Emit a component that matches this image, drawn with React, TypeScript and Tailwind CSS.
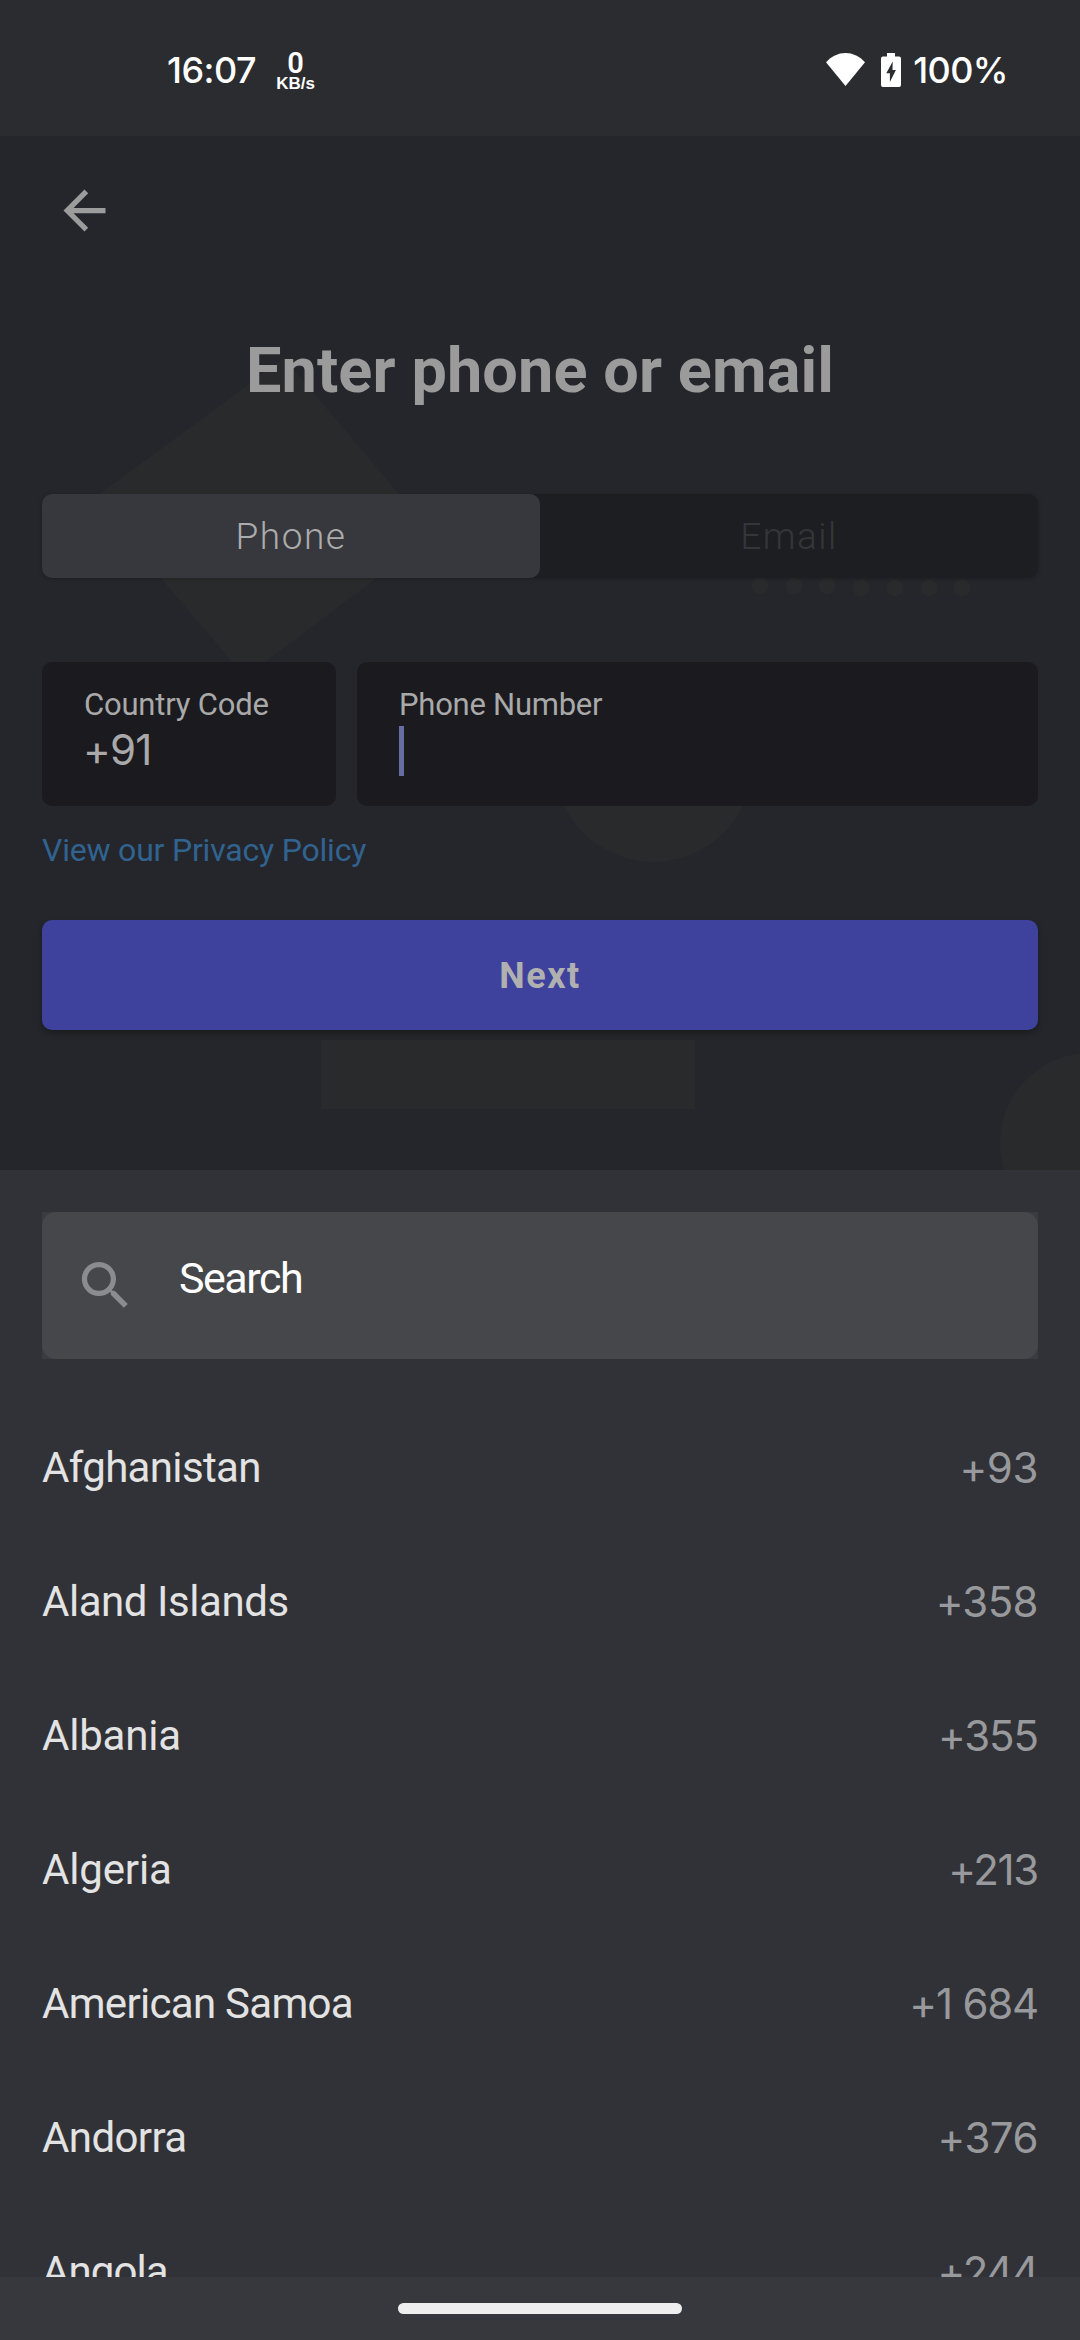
type Country = { name: string; code: string; nameFit: string; codeFit: string };

const countries: Country[] = [
  { name: "Afghanistan", code: "+93", nameFit: "tracking-[-0.65px]", codeFit: "tracking-[-0.4px]" },
  { name: "Aland Islands", code: "+358", nameFit: "tracking-[-0.45px]", codeFit: "tracking-[-0.6px]" },
  { name: "Albania", code: "+355", nameFit: "tracking-[-0.2px]", codeFit: "tracking-[-1.1px]" },
  { name: "Algeria", code: "+213", nameFit: "tracking-[-0.15px]", codeFit: "tracking-[-1.3px]" },
  { name: "American Samoa", code: "+1 684", nameFit: "tracking-[-0.7px]", codeFit: "tracking-[-1.2px]" },
  { name: "Andorra", code: "+376", nameFit: "tracking-[-0.6px]", codeFit: "tracking-[-0.5px]" },
  { name: "Angola", code: "+244", nameFit: "tracking-[-0.9px]", codeFit: "tracking-[-1.3px]" },
];

function StatusBar() {
  return (
    <header className="flex h-[136px] shrink-0 justify-between bg-[#2b2c30] pr-[72px] pl-[167px] font-[Inter,sans-serif] text-white">
      <div className="flex">
        <span className="pt-[50px] text-[36px] leading-[40px] font-medium tracking-[-0.5px]">16:07</span>
        <div className="ml-[20px] flex flex-col items-center pt-[51px]">
          <span className="font-[Roboto,sans-serif] text-[29px] leading-[25px] font-semibold">0</span>
          <span className="font-['Liberation_Sans',sans-serif] text-[17px] leading-[16px] font-bold">KB/s</span>
        </div>
      </div>
      <div className="flex">
        <svg className="mt-[53px] h-[33px] w-[39px]" viewBox="0 0 39 33" fill="#fff">
          <path d="M19.5 33 0 9.2C5.4 3.4 12 0 19.5 0S33.600 3.400 39 9.200Z" />
        </svg>
        <svg className="mt-[53px] ml-[16px] h-[34px] w-[20px]" viewBox="0 0 20 34">
          <path fill="#fff" d="M6 0h8v3.500h4A2 2 0 0 1 20 5.500V32a2 2 0 0 1-2 2H2a2 2 0 0 1-2-2V5.500a2 2 0 0 1 2-2h4Z" />
          <path fill="#2b2c30" d="M11.700 8.500 5.300 20.300h3.600V29l6-12h-3.400Z" />
        </svg>
        <span className="ml-[12px] pt-[50px] text-[36px] leading-[40px] font-medium tracking-[-0.6px]">100%</span>
      </div>
    </header>
  );
}

function Backdrop() {
  return (
    <svg className="absolute inset-0 h-full w-full" viewBox="0 136 1080 1034" fill="#292a2c">
      <path d="M284 358 434 535 245 677 93 499Z" />
      {[760, 794, 827, 861, 895, 929, 962].map((x, i) => (
        <circle key={x} cx={x} cy={i < 3 ? 586 : 588} r="8.500" />
      ))}
      <circle cx="653.500" cy="763" r="99" />
      <path d="M321 1040h374v69H321Z" />
      <circle cx="1090" cy="1143" r="90" />
    </svg>
  );
}

export default function App() {
  return (
    <div className="flex h-[2340px] w-[1080px] flex-col overflow-hidden bg-[#313237] font-[Roboto,sans-serif]">
      <StatusBar />

      <main className="relative h-[1034px] shrink-0 bg-[#25262b]">
        <Backdrop />
        <div className="relative flex flex-col px-[42px]">
          <svg className="mt-[43px] ml-[11px] h-[63px] w-[63px]" viewBox="0 0 24 24" fill="#9c9c9c">
            <path d="M20 11H7.830l5.590-5.590L12 4l-8 8 8 8 1.410-1.410L7.830 13H20v-2z" />
          </svg>
          <h1 className="mt-[91px] text-center text-[63px] leading-[75px] font-bold tracking-[0.1px] text-[#9b9b9b]">
            Enter phone or email
          </h1>

          <div className="mt-[86px] flex h-[84px] rounded-[10px] bg-[#1d1e21] text-[37px] font-light shadow-[0_1px_4px_rgba(0,0,0,0.2)]">
            <button className="flex-1 rounded-[10px] bg-[#37383d] pt-[2px] tracking-[1.500px] text-[#acacac]">Phone</button>
            <button className="flex-1 pt-[2px] tracking-[1.400px] text-[#35363a]">Email</button>
          </div>

          <div className="mt-[84px] flex h-[144px] gap-[21px] text-[#a9a9a9]">
            <div className="flex w-[294px] flex-col rounded-[10px] bg-[#1b1a1f] px-[42px] pt-[24px]">
              <span className="text-[31px] leading-[37px] tracking-[-0.2px] whitespace-nowrap">Country Code</span>
              <span className="-ml-px font-[Inter,sans-serif] text-[42px] leading-[54px] tracking-[-0.8px]">+91</span>
            </div>
            <div className="flex flex-1 flex-col rounded-[10px] bg-[#1b1a1f] px-[42px] pt-[24px]">
              <span className="text-[31px] leading-[37px] tracking-[-0.25px]">Phone Number</span>
              <span className="mt-[3px] h-[50px] w-[5px] bg-[#686da4]" />
            </div>
          </div>

          <a className="mt-[25px] text-[32px] leading-[38px] tracking-[-0.2px] text-[#316390]">View our Privacy Policy</a>

          <button className="mt-[51px] h-[110px] rounded-[10px] bg-[#3f429c] pt-[1px] text-[36px] font-bold tracking-[1.500px] text-[#b0b0b0] shadow-[0_3px_6px_rgba(0,0,0,0.3)]">
            Next
          </button>
        </div>
      </main>

      <section className="relative flex min-h-0 flex-1 flex-col overflow-hidden bg-[#313237] px-[42px] pt-[42px]">
        <div className="h-[147px] shrink-0 bg-[#3a3b40]">
          <div className="flex h-full items-center rounded-[14px] bg-[#46474b] pl-[32px]">
            <svg className="h-[63px] w-[63px]" viewBox="0 0 24 24" fill="#8b8c8f">
              <path d="M15.500 14h-.790l-.280-.270C15.410 12.590 16 11.110 16 9.500 16 5.910 13.090 3 9.500 3S3 5.910 3 9.500 5.910 16 9.500 16c1.610 0 3.090-.590 4.230-1.570l.270.280v.790l5 4.990L20.490 19l-4.990-5zm-6 0C7.010 14 5 11.990 5 9.500S7.010 5 9.500 5 14 7.010 14 9.500 11.990 14 9.500 14z" />
            </svg>
            <span className="ml-[42px] pb-[15px] text-[43px] leading-[50px] tracking-[-1.500px] text-white">Search</span>
          </div>
        </div>

        <ul className="mt-[41px] shrink-0">
          {countries.map((c) => (
            <li key={c.name} className="flex h-[134px] items-center justify-between text-[42px]">
              <span className={`text-[#e3e3e3] ${c.nameFit}`}>{c.name}</span>
              <span className={`font-[Inter,sans-serif] text-[#98999c] ${c.codeFit}`}>{c.code}</span>
            </li>
          ))}
        </ul>
      </section>

      <footer className="relative flex h-[63px] shrink-0 items-start justify-center bg-[#37383d] pt-[26px]">
        <div className="h-[11px] w-[284px] rounded-full bg-[#eeeeee]" />
      </footer>
    </div>
  );
}
